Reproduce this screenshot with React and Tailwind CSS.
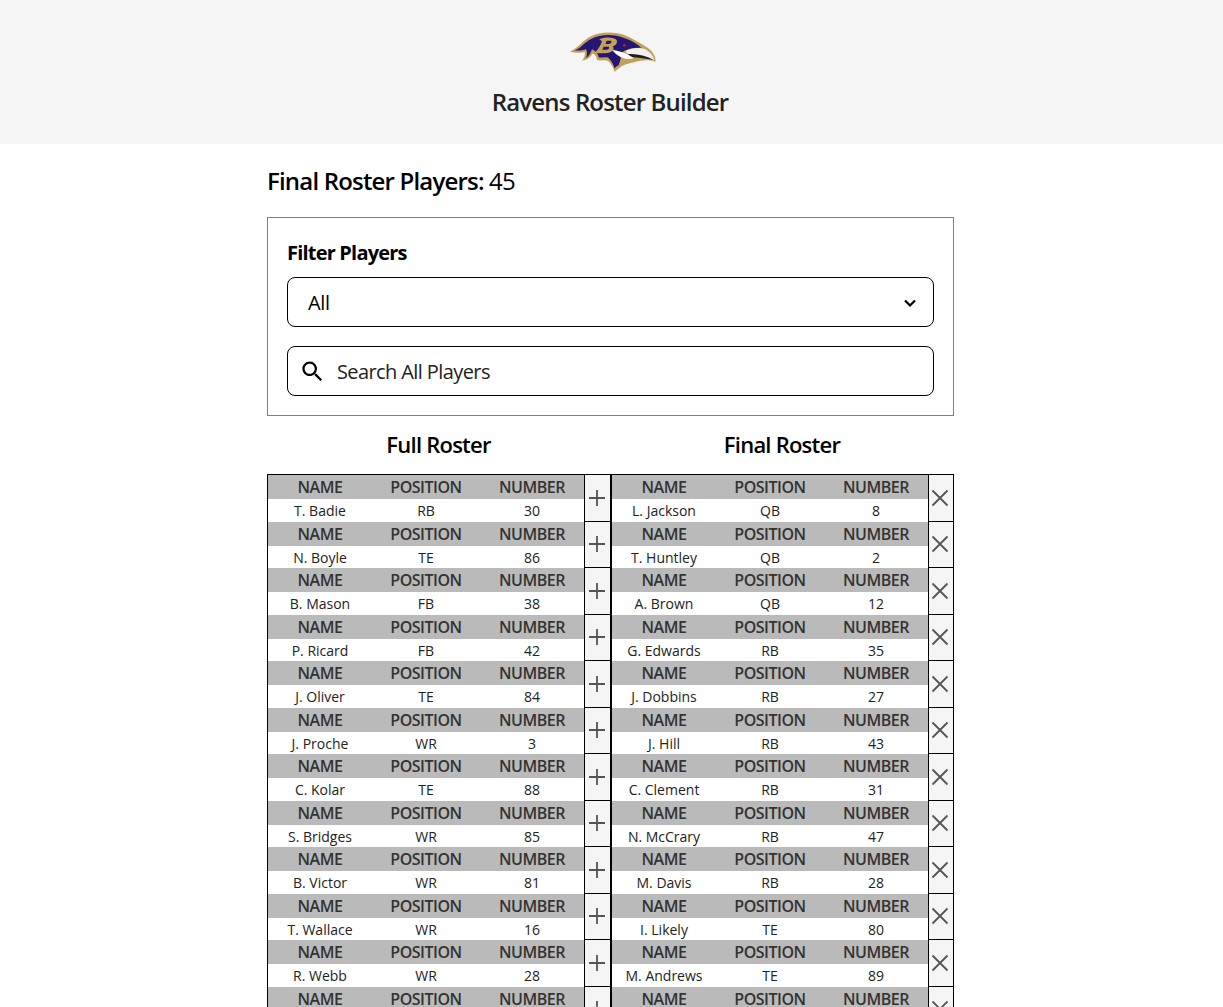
import React from 'react';

const fullRoster = [
  ['T. Badie', 'RB', 30],
  ['N. Boyle', 'TE', 86],
  ['B. Mason', 'FB', 38],
  ['P. Ricard', 'FB', 42],
  ['J. Oliver', 'TE', 84],
  ['J. Proche', 'WR', 3],
  ['C. Kolar', 'TE', 88],
  ['S. Bridges', 'WR', 85],
  ['B. Victor', 'WR', 81],
  ['T. Wallace', 'WR', 16],
  ['R. Webb', 'WR', 28],
  ['', '', ''],
];

const finalRoster = [
  ['L. Jackson', 'QB', 8],
  ['T. Huntley', 'QB', 2],
  ['A. Brown', 'QB', 12],
  ['G. Edwards', 'RB', 35],
  ['J. Dobbins', 'RB', 27],
  ['J. Hill', 'RB', 43],
  ['C. Clement', 'RB', 31],
  ['N. McCrary', 'RB', 47],
  ['M. Davis', 'RB', 28],
  ['I. Likely', 'TE', 80],
  ['M. Andrews', 'TE', 89],
  ['', '', ''],
];

function Logo() {
  return (
    <svg viewBox="0 0 420 180" className="w-[140px] h-[60px] block -ml-1">
      <path d="M90 95 C115 82 128 62 150 50 C180 34 225 34 255 46 C280 56 300 70 318 80 C338 92 347 108 347 125 C325 118 305 120 285 126 C268 130 252 134 243 140 C236 146 228 150 224 156 C220 142 212 130 205 124 C195 118 180 124 170 119 C172 112 165 104 158 100 C152 112 142 120 126 122 C134 112 136 104 134 96 C122 100 108 98 90 95Z" fill="#c2a05a" />
      <path d="M104 92 C122 84 134 66 155 56 C182 42 225 42 252 54 C276 62 292 72 304 84 C280 82 260 88 244 98 C244 112 240 124 236 136 C230 138 226 142 224 146 C220 132 212 118 202 112 C192 110 182 114 176 112 C176 104 168 94 156 88 C152 100 146 110 138 114 C142 104 142 94 138 88 C128 92 116 92 104 92Z" fill="#241773" />
      <path d="M256 94 C274 84 296 82 312 86 C330 94 341 108 343 121 C322 112 300 108 280 110 C270 108 262 102 256 94Z" fill="#f0f0f0" />
      <path d="M262 103 C285 100 315 106 341 120 C320 116 296 113 272 112Z" fill="#1c1c1c" />
      <path d="M216 90 C236 92 256 98 282 114 C262 122 236 114 216 90Z" fill="#ffffff" />
      <path d="M178 58 C192 50 224 50 230 60 C234 70 226 77 218 79 C224 85 220 96 206 98 C194 100 178 100 164 98 C174 90 182 76 186 64Z" fill="#c6a15b" />
      <path d="M200 62 L213 62 C217 66 213 70 207 72 L196 72Z M191 80 L207 80 C209 85 205 89 199 89 L187 89Z" fill="#241773" />
      <circle cx="253" cy="76" r="4" fill="#b3263d" />
    </svg>
  );
}

function SearchIcon() {
  return (
    <svg viewBox="0 0 24 24" className="w-[27px] h-[27px] fill-black">
      <path d="M15.5 14h-.79l-.28-.27C15.41 12.59 16 11.11 16 9.5 16 5.91 13.09 3 9.5 3S3 5.91 3 9.5 5.91 16 9.5 16c1.61 0 3.09-.59 4.23-1.57l.27.28v.79l5 4.99L20.49 19l-4.99-5zm-6 0C7.01 14 5 11.99 5 9.5S7.01 5 9.5 5 14 7.01 14 9.5 11.99 14 9.5 14z" />
    </svg>
  );
}

function Chevron() {
  return (
    <svg viewBox="0 0 14 10" className="w-[14px] h-[10px]">
      <path d="M2 2.5 L7 7.5 L12 2.5" fill="none" stroke="#000" strokeWidth="2.2" />
    </svg>
  );
}

function PlusIcon() {
  return (
    <svg viewBox="0 0 18 18" className="w-[18px] h-[18px]">
      <path d="M9 1 V17 M1 9 H17" stroke="#555" strokeWidth="1.8" fill="none" />
    </svg>
  );
}

function CloseIcon() {
  return (
    <svg viewBox="0 0 18 18" className="w-[18px] h-[18px]">
      <path d="M1.5 1.5 L16.5 16.5 M16.5 1.5 L1.5 16.5" stroke="#555" strokeWidth="1.8" fill="none" />
    </svg>
  );
}

function PlayerRow({ player, icon }) {
  return (
    <div className="flex h-[46.5px]">
      <div className="w-[316px] shrink-0">
        <div className="grid grid-cols-[104px_108px_104px] h-6 bg-[#bababa] text-[#333] text-base leading-6 text-center font-semibold tracking-[-0.03em]">
          <div>NAME</div>
          <div>POSITION</div>
          <div>NUMBER</div>
        </div>
        <div className="grid grid-cols-[104px_108px_104px] h-[22.5px] text-[#222] text-sm leading-6 text-center">
          <div>{player[0]}</div>
          <div>{player[1]}</div>
          <div>{player[2]}</div>
        </div>
      </div>
      <div className="flex-1 flex items-center justify-center pr-0.5 bg-[#f5f5f5] border-l border-b border-black">
        {icon}
      </div>
    </div>
  );
}

export default function App() {
  return (
    <div className="h-[1007px] overflow-hidden bg-white text-black font-['Open_Sans',sans-serif]">
      <header className="h-[144px] bg-[#f5f5f5] pt-5 flex flex-col items-center">
        <Logo />
        <h1 className="mt-[6px] -ml-[3px] text-[24px] leading-8 font-semibold text-[#222] tracking-[-0.035em]">Ravens Roster Builder</h1>
      </header>

      <main className="w-[687px] ml-[267px]">
        <div className="pt-[21px] h-[73px] text-[24px] leading-8 tracking-[-0.034em]">
          <span className="font-semibold">Final Roster Players:</span> 45
        </div>

        <section className="h-[199px] border border-[#808080] px-[19px] pt-5">
          <h2 className="text-[20px] leading-8 font-bold tracking-[-0.04em] -mt-px">Filter Players</h2>
          <div className="mt-2 h-[50px] border border-black rounded-lg pl-5 pr-[16px] pt-px flex items-center justify-between text-[20px] tracking-[-0.02em]">
            <span>All</span>
            <Chevron />
          </div>
          <div className="mt-[19px] h-[50px] border border-black rounded-lg pl-[11px] pt-px flex items-center gap-[11px] text-[20px] text-[#222] tracking-[-0.03em]">
            <SearchIcon />
            <span>Search All Players</span>
          </div>
        </section>

        <div className="flex h-[58px] pt-3 text-[22px] leading-8 font-semibold text-center tracking-[-0.035em]">
          <div className="w-[343px]">Full Roster</div>
          <div className="flex-1">Final Roster</div>
        </div>

        <div className="flex border-t border-r border-black">
          <div className="w-[343px] border-l border-black">
            {fullRoster.map((p, i) => (
              <PlayerRow key={i} player={p} icon={<PlusIcon />} />
            ))}
          </div>
          <div className="flex-1 border-l-2 border-black">
            {finalRoster.map((p, i) => (
              <PlayerRow key={i} player={p} icon={<CloseIcon />} />
            ))}
          </div>
        </div>
      </main>
    </div>
  );
}
